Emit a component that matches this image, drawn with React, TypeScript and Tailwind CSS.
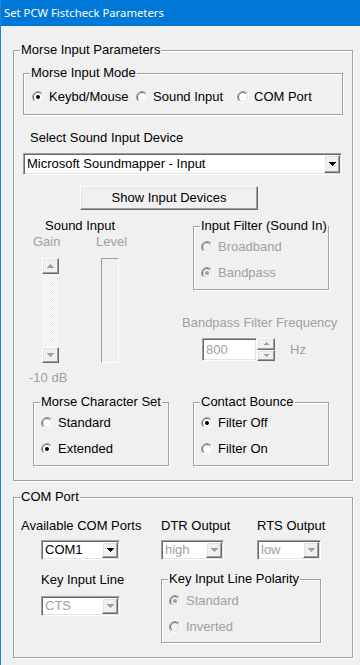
import React from 'react'

const raised =
  'bg-[#f0f0f0] border border-t-white border-l-white border-r-[#696969] border-b-[#696969] shadow-[inset_-1px_-1px_0_#a0a0a0,inset_1px_1px_0_#e3e3e3]'
const sunken =
  'border border-t-[#a0a0a0] border-l-[#a0a0a0] border-r-white border-b-white shadow-[inset_1px_1px_0_#696969,inset_-1px_-1px_0_#e3e3e3]'

function DownArrow({ color = '#000' }: { color?: string }) {
  return (
    <svg width="7" height="4" viewBox="0 0 7 4" shapeRendering="crispEdges">
      <path d="M0 0H7V1H6V2H5V3H4V4H3V3H2V2H1V1H0Z" fill={color} />
    </svg>
  )
}

function UpArrow({ color = '#000' }: { color?: string }) {
  return (
    <svg width="7" height="4" viewBox="0 0 7 4" shapeRendering="crispEdges">
      <path d="M3 0H4V1H5V2H6V3H7V4H0V3H1V2H2V1H3Z" fill={color} />
    </svg>
  )
}

function Radio({ checked = false, disabled = false }: { checked?: boolean; disabled?: boolean }) {
  return (
    <svg width="12" height="12" viewBox="0 0 12 12" className="shrink-0">
      <circle cx="6" cy="6" r="4.5" fill={disabled ? '#f0f0f0' : '#fff'} />
      <path d="M2.1 9.9A5.5 5.5 0 0 1 9.9 2.1" stroke="#a0a0a0" fill="none" />
      <path d="M9.9 2.1A5.5 5.5 0 0 1 2.1 9.9" stroke="#fff" fill="none" />
      <path d="M2.8 9.2A4.5 4.5 0 0 1 9.2 2.8" stroke="#696969" fill="none" />
      <path d="M9.2 2.8A4.5 4.5 0 0 1 2.8 9.2" stroke="#e3e3e3" fill="none" />
      {checked && <circle cx="6" cy="6" r="2" fill={disabled ? '#a0a0a0' : '#000'} />}
    </svg>
  )
}

function Option({
  label,
  checked,
  disabled,
  className = '',
}: {
  label: string
  checked?: boolean
  disabled?: boolean
  className?: string
}) {
  return (
    <label className={`flex h-[16px] items-center gap-[5px] leading-[16px] ${className}`}>
      <Radio checked={checked} disabled={disabled} />
      <span className={disabled ? 'text-[#a0a0a0]' : ''}>{label}</span>
    </label>
  )
}

function Group({
  label,
  className = '',
  children,
}: {
  label: string
  className?: string
  children?: React.ReactNode
}) {
  return (
    <fieldset
      className={`border border-[#a0a0a0] shadow-[1px_1px_0_#fff,inset_1px_1px_0_#fff] ${className}`}
    >
      <legend className="ml-[6px] bg-[#f0f0f0] px-px leading-[16px]">{label}</legend>
      {children}
    </fieldset>
  )
}

function Combo({
  value,
  className = '',
  disabled = false,
}: {
  value: string
  className?: string
  disabled?: boolean
}) {
  return (
    <div className={`flex bg-white ${sunken} ${className}`}>
      <div className="flex flex-1 items-center p-[2px]">
        <span className={`pl-[1px] leading-[16px] ${disabled ? 'text-[#a0a0a0]' : ''}`}>{value}</span>
      </div>
      <div className={`my-px mr-px flex w-[16px] items-center justify-center ${raised}`}>
        <DownArrow color={disabled ? '#a0a0a0' : '#000'} />
      </div>
    </div>
  )
}

export default function App() {
  return (
    <div className="h-[665px] w-[360px] overflow-hidden border-l border-[#1883d7] bg-[#f0f0f0] font-['Liberation_Sans',Arial,sans-serif] text-[13px] text-black">
      {/* Title bar */}
      <div className="h-[26px] bg-[#0078d7] pl-[3px] font-['Noto_Sans',sans-serif] text-[11.3px] leading-[26px] text-white">
        Set PCW Fistcheck Parameters
      </div>

      {/* Morse Input Parameters */}
      <Group label="Morse Input Parameters" className="ml-[12px] mt-[16px] h-[439px] w-[340px]">
        <Group label="Morse Input Mode" className="ml-[9px] mt-[7px] h-[50px] w-[320px]">
          <div className="mt-[8px] flex pl-[8px]">
            <Option label="Keybd/Mouse" checked className="w-[104px]" />
            <Option label="Sound Input" className="w-[101px]" />
            <Option label="COM Port" />
          </div>
        </Group>

        <div className="ml-[16px] mt-[15px] leading-[16px]">Select Sound Input Device</div>
        <Combo value="Microsoft Soundmapper - Input" className="ml-[9px] mt-[7px] h-[22px] w-[319px]" />

        <button className={`ml-[66px] mt-[11px] block h-[24px] w-[178px] text-center leading-[16px] ${raised}`}>
          Show Input Devices
        </button>

        <div className="flex h-[184px]">
          {/* Sound input column */}
          <div className="w-[168px]">
            <div className="ml-[31px] mt-[8px] leading-[16px]">Sound Input</div>
            <div className="flex leading-[16px] text-[#a0a0a0]">
              <span className="ml-[19px] w-[63px]">Gain</span>
              <span>Level</span>
            </div>
            <div className="mt-[8px] flex">
              <div className="ml-[28px] flex h-[105px] w-[17px] flex-col">
                <div className={`flex h-[16px] items-center justify-center ${raised}`}>
                  <UpArrow color="#a0a0a0" />
                </div>
                <div className="flex-1 bg-[repeating-conic-gradient(#ffffff_0_25%,#ebebeb_0_50%)] bg-[length:2px_2px]" />
                <div className={`flex h-[16px] items-center justify-center ${raised}`}>
                  <DownArrow color="#a0a0a0" />
                </div>
              </div>
              <div className="ml-[42px] h-[105px] w-[18px] border border-t-[#a0a0a0] border-l-[#a0a0a0] border-r-white border-b-white" />
            </div>
            <div className="ml-[15px] mt-[7px] leading-[16px] text-[#a0a0a0]">-10 dB</div>
          </div>

          {/* Filter column */}
          <div className="flex-1">
            <Group label="Input Filter (Sound In)" className="ml-[11px] mt-[8px] h-[72px] w-[136px]">
              <div className="mt-[5px] flex flex-col gap-[10px] pl-[7px]">
                <Option label="Broadband" disabled />
                <Option label="Bandpass" checked disabled />
              </div>
            </Group>
            <div className="mt-[25px] leading-[16px] text-[#a0a0a0]">Bandpass Filter Frequency</div>
            <div className="mt-[7px] flex items-center">
              <div className={`ml-[20px] flex h-[23px] w-[55px] items-center bg-white pl-[3px] text-[#a0a0a0] ${sunken}`}>
                800
              </div>
              <div className="flex h-[23px] w-[18px] flex-col">
                <div className={`flex flex-1 items-center justify-center ${raised}`}>
                  <svg width="5" height="3" viewBox="0 0 5 3" shapeRendering="crispEdges">
                    <path d="M2 0H3V1H4V2H5V3H0V2H1V1H2Z" fill="#a0a0a0" />
                  </svg>
                </div>
                <div className={`flex flex-1 items-center justify-center ${raised}`}>
                  <svg width="5" height="3" viewBox="0 0 5 3" shapeRendering="crispEdges">
                    <path d="M0 0H5V1H4V2H3V3H2V2H1V1H0Z" fill="#a0a0a0" />
                  </svg>
                </div>
              </div>
              <span className="ml-[15px] text-[#a0a0a0]">Hz</span>
            </div>
          </div>
        </div>

        <div className="flex">
          <Group label="Morse Character Set" className="ml-[19px] h-[72px] w-[136px]">
            <div className="mt-[5px] flex flex-col gap-[10px] pl-[7px]">
              <Option label="Standard" />
              <Option label="Extended" checked />
            </div>
          </Group>
          <Group label="Contact Bounce" className="ml-[24px] h-[72px] w-[136px]">
            <div className="mt-[5px] flex flex-col gap-[10px] pl-[7px]">
              <Option label="Filter Off" checked />
              <Option label="Filter On" />
            </div>
          </Group>
        </div>
      </Group>

      {/* COM Port */}
      <Group label="COM Port" className="ml-[12px] mt-[8px] h-[169px] w-[340px]">
        <div className="mt-[13px] flex pl-[7px] leading-[16px]">
          <span className="w-[140px]">Available COM Ports</span>
          <span className="w-[96px]">DTR Output</span>
          <span>RTS Output</span>
        </div>
        <div className="mt-[6px] flex">
          <Combo value="COM1" className="ml-[27px] h-[20px] w-[79px]" />
          <Combo value="high" disabled className="ml-[41px] h-[20px] w-[63px]" />
          <Combo value="low" disabled className="ml-[33px] h-[20px] w-[64px]" />
        </div>
        <div className="mt-[11px] flex">
          <div className="ml-[27px] w-[120px]">
            <div className="mt-px leading-[16px]">Key Input Line</div>
            <Combo value="CTS" disabled className="mt-[8px] h-[20px] w-[79px]" />
          </div>
          <Group label="Key Input Line Polarity" className="h-[72px] w-[160px]">
            <div className="mt-[6px] flex flex-col gap-[10px] pl-[7px]">
              <Option label="Standard" checked disabled />
              <Option label="Inverted" disabled />
            </div>
          </Group>
        </div>
      </Group>
    </div>
  )
}
